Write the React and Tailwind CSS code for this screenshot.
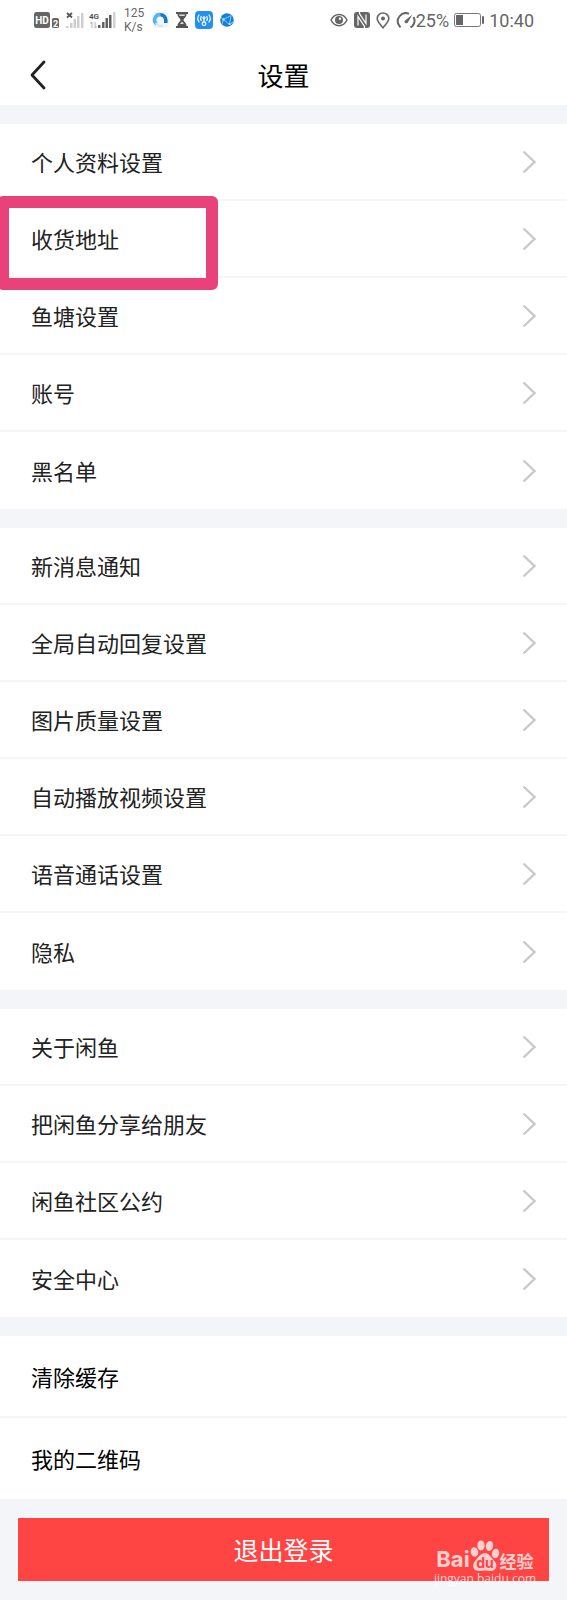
import React from "react";

const groups = [
  {
    rows: ["个人资料设置", "收货地址", "鱼塘设置", "账号", "黑名单"],
  },
  {
    rows: [
      "新消息通知",
      "全局自动回复设置",
      "图片质量设置",
      "自动播放视频设置",
      "语音通话设置",
      "隐私",
    ],
  },
  {
    rows: ["关于闲鱼", "把闲鱼分享给朋友", "闲鱼社区公约", "安全中心"],
  },
];

const highlighted = "收货地址";

const Chevron = () => (
  <svg width="14" height="24" viewBox="0 0 14 24" fill="none" aria-hidden="true">
    <path d="M1.5 1.5 L12.5 12 L1.5 22.5" stroke="#c9c9c9" strokeWidth="2.4" />
  </svg>
);

/* ===== Status bar icons ===== */
const HdIcon = () => (
  <svg width="26" height="18" viewBox="0 0 26 18" aria-hidden="true">
    <rect x="0" y="1" width="16" height="16" rx="2.5" fill="#666" />
    <text x="8" y="13" textAnchor="middle" fontSize="10" fontWeight="700" fill="#fff" fontFamily="Roboto, sans-serif">
      HD
    </text>
    <rect x="18" y="7" width="7" height="10" rx="1.5" fill="#666" />
    <text x="21.5" y="15.5" textAnchor="middle" fontSize="9" fontWeight="700" fill="#fff" fontFamily="Roboto, sans-serif">
      2
    </text>
  </svg>
);

const SignalOff = () => (
  <svg width="18" height="18" viewBox="0 0 18 18" aria-hidden="true">
    <path d="M1 2 L6 6.5 M6 2 L1 6.5" stroke="#555" strokeWidth="1.7" />
    <g fill="#cfcfcf">
      <rect x="0" y="15" width="2.5" height="2" />
      <rect x="4" y="12" width="2.5" height="5" />
      <rect x="7.5" y="8" width="2.5" height="9" />
      <rect x="11" y="5" width="2.5" height="12" />
      <rect x="15" y="2" width="2.5" height="15" />
    </g>
  </svg>
);

const Signal4g = () => (
  <svg width="27" height="18" viewBox="0 0 27 18" aria-hidden="true">
    <text x="0" y="8" fontSize="8" fontWeight="700" fill="#555" fontFamily="Roboto, sans-serif">
      4G
    </text>
    <path d="M3 17 V11 M1.5 12.5 L3 11 M6 11 V17 M7.5 15.5 L6 17" stroke="#bdbdbd" strokeWidth="1.2" fill="none" />
    <g fill="#606060">
      <rect x="9" y="14" width="2.5" height="3" />
      <rect x="13" y="11" width="2.5" height="6" />
      <rect x="16.5" y="7" width="2.5" height="10" />
      <rect x="20" y="4" width="2.5" height="13" />
    </g>
    <rect x="24" y="1" width="2.5" height="16" fill="#d2d2d2" />
  </svg>
);

const BrowserIcon = () => (
  <svg width="17" height="16" viewBox="0 0 17 16" fill="none" aria-hidden="true">
    <rect width="17" height="16" rx="4" fill="#f1f5f8" />
    <path d="M4.500 12 A5.300 5.300 0 0 1 8.500 2.700" stroke="#55b4ee" strokeWidth="3.6" />
    <path d="M8.300 2.700 A5.300 5.300 0 0 1 13.800 8 L13.800 11" stroke="#1676d2" strokeWidth="3.6" />
    <path d="M4 11 Q6.500 15 11 13.500" stroke="#d7e6f1" strokeWidth="2" />
  </svg>
);

const HourglassIcon = () => (
  <svg width="12" height="16" viewBox="0 0 12 16" aria-hidden="true">
    <path d="M0 0 H12 V2 H0 Z M0 14 H12 V16 H0 Z" fill="#555" />
    <path d="M1.5 2 H10.5 C10.5 5.5 7.5 6.5 7.5 8 C7.5 9.5 10.5 10.5 10.5 14 H1.5 C1.5 10.5 4.5 9.5 4.5 8 C4.5 6.5 1.5 5.5 1.5 2 Z" fill="#555" />
    <path d="M3 2.500 H9 L8.500 4 H3.500 Z M6 9.500 L8 12 H4 Z" fill="#ddd" />
  </svg>
);

const WifiAppIcon = () => (
  <svg width="18" height="18" viewBox="0 0 18 18" fill="none" aria-hidden="true">
    <rect width="18" height="18" rx="4" fill="#2490ee" />
    <g stroke="#fff" strokeWidth="1.2" strokeLinecap="round">
      <path d="M4 4 Q1.5 7.5 4 11 M6.2 5.5 Q5 7.5 6.2 9.5 M14 4 Q16.5 7.5 14 11 M11.8 5.5 Q13 7.5 11.8 9.5 M9 8 V11" />
      <circle cx="9" cy="6.8" r="1" />
      <circle cx="9" cy="12.7" r="1.8" />
    </g>
  </svg>
);

const GlobeAppIcon = () => (
  <svg width="14" height="14" viewBox="0 0 14 14" fill="none" aria-hidden="true">
    <circle cx="7" cy="7" r="6.8" fill="#1580d6" />
    <path d="M11 2.5 L3.5 6.5 L9.5 11.5 Z M1 4.5 L3.5 6.5 L2 11 M9.5 11.5 L13 9" stroke="#8fd0fa" strokeWidth="0.9" />
    <circle cx="3.5" cy="6.5" r="1.2" fill="#bfe4ff" />
    <circle cx="9.5" cy="11" r="1.1" fill="#bfe4ff" />
  </svg>
);

const EyeIcon = () => (
  <svg width="18" height="14" viewBox="0 0 18 14" fill="none" aria-hidden="true">
    <path d="M1 7 C4.5 -0.5 13.5 -0.5 17 7 C13.5 14.5 4.5 14.5 1 7 Z" stroke="#666" strokeWidth="1.5" />
    <circle cx="9" cy="7" r="4" fill="#666" />
    <circle cx="10" cy="5.8" r="1.2" fill="#fff" />
  </svg>
);

const NfcIcon = () => (
  <svg width="16" height="16" viewBox="0 0 16 16" fill="none" aria-hidden="true">
    <rect width="16" height="16" rx="3" fill="#666" />
    <path d="M5.500 0 L5.500 1.500 L12 11.500 V2.500 M10.500 16 V14.500 L4 4.500 V13.500" stroke="#fff" strokeWidth="1.2" />
  </svg>
);

const PinIcon = () => (
  <svg width="14" height="17" viewBox="0 0 14 17" fill="none" aria-hidden="true">
    <path d="M7 15.8 C4 12 1.2 9.5 1.2 6.5 A5.8 5.5 0 0 1 12.8 6.5 C12.8 9.5 10 12 7 15.8 Z" stroke="#666" strokeWidth="1.6" />
    <circle cx="7" cy="6.5" r="2" fill="#666" />
  </svg>
);

const GaugeIcon = () => (
  <svg width="20" height="17" viewBox="0 0 20 17" fill="none" aria-hidden="true">
    <path d="M4.5 15.5 L3.5 14 A8 8 0 0 1 13 1.8 M17.5 5 A8 8 0 0 1 16.5 14 L14.5 15.5" stroke="#666" strokeWidth="2" />
    <path d="M16.5 2.5 L11.5 11 A2 2 0 0 1 8.5 9 Z" fill="#666" />
  </svg>
);

const BatteryIcon = () => (
  <svg width="30" height="16" viewBox="0 0 30 16" fill="none" aria-hidden="true">
    <rect x="0.5" y="1.5" width="26" height="13" rx="2" stroke="#777" />
    <rect x="2" y="3" width="7" height="10" fill="#666" />
    <rect x="28" y="4" width="2" height="8" rx="1" fill="#666" />
  </svg>
);

const StatusBar = () => (
  <div className="flex h-10 items-center justify-between pr-[33px] pl-[34px] font-[Roboto,sans-serif] text-[18px] text-[#666]">
    <div className="flex items-center">
      <HdIcon />
      <div className="ml-[6px] flex gap-[5px]">
        <SignalOff />
        <Signal4g />
      </div>
      <p className="ml-[8px] text-[12px] leading-[14px]">
        125
        <br />
        K/s
      </p>
      <div className="ml-[8px] flex items-center gap-[7px]">
        <BrowserIcon />
        <HourglassIcon />
        <WifiAppIcon />
        <GlobeAppIcon />
      </div>
    </div>

    <div className="flex items-center">
      <div className="flex items-center gap-[6px]">
        <EyeIcon />
        <NfcIcon />
        <PinIcon />
        <GaugeIcon />
      </div>
      <span>25%</span>
      <span className="ml-[5px]">
        <BatteryIcon />
      </span>
      <span className="ml-[5px]">10:40</span>
    </div>
  </div>
);

const Row = ({ label, last }) => (
  <li className="relative">
    <a
      href="#"
      className={`flex h-[77px] items-center justify-between pr-[31px] pl-[31px] text-[22px] text-[#222] ${
        last ? "" : "border-b-2 border-[#f5f5f6]"
      }`}
    >
      {label}
      <Chevron />
    </a>
    {label === highlighted && (
      <span className="pointer-events-none absolute -top-[5px] -left-[3px] z-10 h-[94px] w-[221px] rounded-md border-12 border-[#e9417a]" />
    )}
  </li>
);

/* Baidu Jingyan mark over the logout button */
const Watermark = () => (
  <div className="pointer-events-none absolute right-[13px] -bottom-[5px] flex flex-col items-center text-white/75">
    <div className="flex items-end">
      <span className="pb-[2px] font-[Inter,sans-serif] text-[22px] leading-[22px] font-bold">Bai</span>
      <svg width="30" height="32" viewBox="0 0 30 32" aria-hidden="true">
        <g fill="currentColor">
          <ellipse cx="4.5" cy="12" rx="3.7" ry="4.8" transform="rotate(-15 4.5 12)" />
          <ellipse cx="11" cy="5.5" rx="3.7" ry="5" />
          <ellipse cx="19.5" cy="6" rx="3.7" ry="5" transform="rotate(8 19.5 6)" />
          <ellipse cx="25.5" cy="13.5" rx="3.6" ry="4.8" transform="rotate(15 25.5 13.5)" />
          <path d="M15 13 C19 13 20.5 17 23.5 20 C29 25 26 31 21 31 C18 31 17 30.5 15 30.5 C13 30.5 12 31 9 31 C4 31 0.5 26 5.5 20.5 C8.5 17 11 13 15 13 Z" />
        </g>
        <text x="15" y="28" textAnchor="middle" fontSize="14" fontWeight="700" fill="#ff4444" fontFamily="Inter, sans-serif">
          du
        </text>
      </svg>
      <span className="text-[17px] leading-[22px] font-bold">经验</span>
    </div>
    <span className="font-[Open_Sans,sans-serif] text-[12px] leading-[14px]">jingyan.baidu.com</span>
  </div>
);

const App = () => {
  return (
    <div className="min-h-screen overflow-x-hidden bg-[#f3f5f9] font-[Noto_Sans_CJK_SC,sans-serif]">
      <header className="bg-white">
        <StatusBar />
        <div className="grid h-[65px] grid-cols-[1fr_auto_1fr] items-center px-[30px] pt-1">
          <button type="button" aria-label="返回" className="justify-self-start">
            <svg width="16" height="30" viewBox="0 0 16 30" fill="none" aria-hidden="true">
              <path d="M14 2 L2 15 L14 28" stroke="#222" strokeWidth="2.8" strokeLinecap="round" strokeLinejoin="round" />
            </svg>
          </button>
          <h1 className="text-[26px] text-black">设置</h1>
        </div>
      </header>

      <main className="mt-[19px] flex flex-col gap-[19px]">
        {groups.map((group, i) => (
          <ul key={i} className="bg-white">
            {group.rows.map((label, j) => (
              <Row key={label} label={label} last={j === group.rows.length - 1} />
            ))}
          </ul>
        ))}

        {/* No arrow on these two */}
        <div className="bg-white text-[22px] text-black">
          <button type="button" className="flex h-[82px] w-full items-center border-b-2 border-[#f5f5f6] pl-[31px]">
            清除缓存
          </button>
          <button type="button" className="flex h-[81px] w-full items-center pl-[31px]">
            我的二维码
          </button>
        </div>

        <div className="relative mx-[18px] mb-[19px]">
          <button type="button" className="h-[63px] w-full bg-[#ff4444] text-[25px] text-white">
            退出登录
          </button>
          <Watermark />
        </div>
      </main>
    </div>
  );
};

export default App;
